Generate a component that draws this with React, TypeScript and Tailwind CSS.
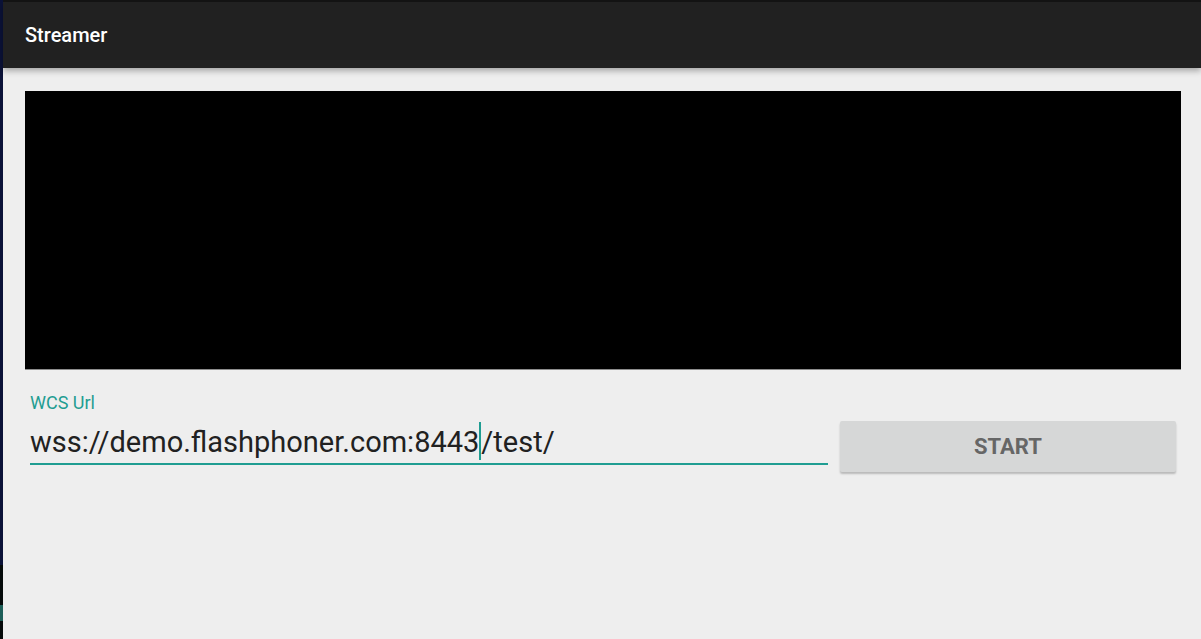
export default function App() {
  return (
    <div className="flex h-[639px] w-[1201px] overflow-hidden bg-[#eeeeee] font-['Roboto',sans-serif]">
      {/* left edge strip */}
      <div className="flex w-[3px] flex-col">
        <div className="h-[565px] bg-[#0b1238]" />
        <div className="flex flex-1 flex-col bg-[#050a0a]">
          <div className="mt-[40px] h-[16px] bg-[#1d5e58]" />
        </div>
      </div>

      <div className="flex flex-1 flex-col">
        <div className="h-[2px] bg-[#141414]" />
        <div className="relative z-10 flex h-[66px] items-center bg-[#212121] pl-[22px] shadow-[0_3px_6px_rgba(0,0,0,0.3)]">
          <span className="text-[20px] font-medium text-white">Streamer</span>
        </div>

        <div className="ml-[22px] mr-[20px] mt-[23px] h-[278px] bg-black" />
        <div className="ml-[22px] mr-[20px] h-px bg-[#8c8c8c]" />

        <div className="flex pl-[27px] pr-[25px] pt-[23px]">
          <div className="flex w-[798px] flex-col">
            <span className="text-[18px] leading-[20px] text-[#1f9d92]">WCS Url</span>
            <div className="flex h-[52px] items-end border-b-2 border-[#1f9d92] pb-[6px] text-[29px] leading-none text-[#212121]">
              <span>wss://demo.flashphoner.com:8443</span>
              <span className="mb-[-3px] h-[38px] w-[2px] bg-[#1f9d92]" />
              <span>/test/</span>
            </div>
          </div>
          <button className="ml-[12px] mt-[28px] flex h-[51px] w-[336px] items-center justify-center rounded-[2px] bg-[#d6d7d7] text-[22px] font-bold text-[#666666] shadow-[0_2px_2px_rgba(0,0,0,0.22)]">
            START
          </button>
        </div>
      </div>
    </div>
  );
}
